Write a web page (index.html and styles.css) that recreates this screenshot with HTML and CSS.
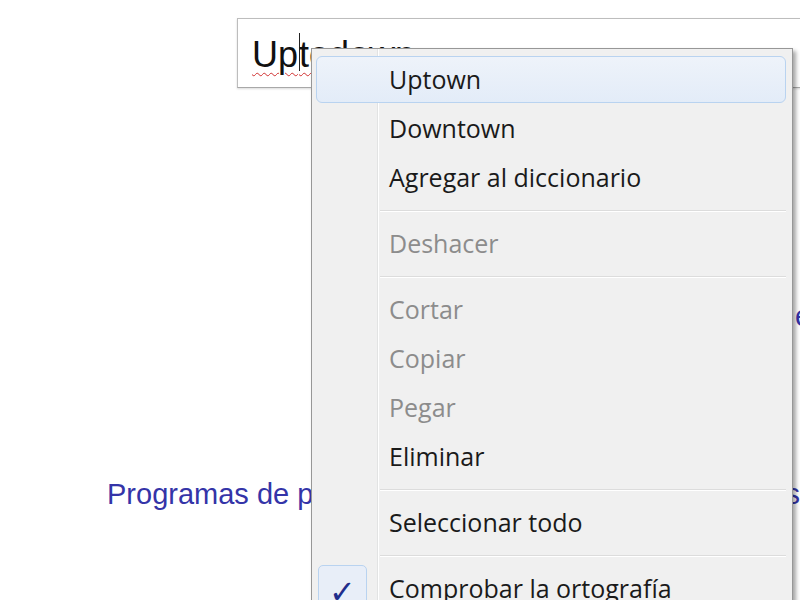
FILE: index.html
```html
<!DOCTYPE html>
<html>
<head>
  <title>Uptodown</title>
  <link rel="stylesheet" href="styles.css">
</head>
<body>
  <div class="page">
    <div class="search-row">
      <div class="search-box">
        <span class="typed"><span class="misspelled">Up</span><span class="caret"></span><span class="misspelled">todown</span></span>
      </div>
    </div>

    <div class="link-row row-top">
      <a class="link right-link" href="#">en</a>
    </div>

    <div class="link-row row-bottom">
      <a class="link left-link" href="#">Programas de prueba</a>
      <a class="link" href="#">s</a>
    </div>

    <ul class="context-menu">
      <li class="item hover">Uptown</li>
      <li class="item">Downtown</li>
      <li class="item">Agregar al diccionario</li>
      <li class="sep"></li>
      <li class="item disabled">Deshacer</li>
      <li class="sep"></li>
      <li class="item disabled">Cortar</li>
      <li class="item disabled">Copiar</li>
      <li class="item disabled">Pegar</li>
      <li class="item">Eliminar</li>
      <li class="sep"></li>
      <li class="item">Seleccionar todo</li>
      <li class="sep"></li>
      <li class="item checked"><span class="check">&#10003;</span>Comprobar la ortografía</li>
    </ul>
  </div>
</body>
</html>
```

FILE: styles.css
```css
html, body {
  margin: 0;
  padding: 0;
  background: #fff;
}
.page {
  position: relative;
  width: 800px;
  height: 600px;
  overflow: hidden;
  font-family: 'Liberation Sans', Arial, sans-serif;
}
.search-row {
  padding: 18px 0 0 237px;
}
.search-box {
  width: 600px;
  height: 70px;
  border: 1px solid #bdbdbd;
  border-bottom-color: #a8a8a8;
  border-right: none;
  box-shadow: 0 1px 2px rgba(0, 0, 0, 0.15);
  box-sizing: border-box;
  padding: 14px 0 0 14px;
  font-size: 36px;
  line-height: 40px;
  color: #111;
}
.typed {
  white-space: nowrap;
}
.misspelled {
  text-decoration: underline wavy #d03030;
  text-decoration-thickness: 1px;
  text-underline-offset: 5px;
}
.caret {
  display: inline-block;
  width: 1px;
  height: 38px;
  background: #222;
  vertical-align: -4px;
  margin: 0 -1px 0 1px;
}
.link-row {
  display: flex;
  font-size: 29px;
  line-height: 32px;
  white-space: nowrap;
}
.row-top {
  margin-top: 212px;
}
.row-bottom {
  margin-top: 146px;
  padding-left: 107px;
}
.link {
  color: #3434a8;
  text-decoration: none;
}
.row-top .right-link {
  margin-left: 795px;
}
.left-link {
  width: 688px;
  overflow: hidden;
}
.context-menu {
  position: absolute;
  left: 311px;
  top: 48px;
  width: 482px;
  height: 580px;
  margin: 0;
  padding: 6px 0 0 0;
  list-style: none;
  box-sizing: border-box;
  background: #f0f0f0;
  border: 1px solid #979797;
  box-shadow: 3px 3px 4px rgba(0, 0, 0, 0.35);
  font-family: 'Open Sans', 'Noto Sans', sans-serif;
  font-size: 25px;
  color: #1a1a1a;
}
.context-menu::before {
  content: "";
  position: absolute;
  left: 65px;
  top: 0;
  bottom: 0;
  width: 1px;
  background: #e2e3e3;
  border-right: 1px solid #fff;
}
.item {
  position: relative;
  height: 49px;
  line-height: 49px;
  padding-left: 77px;
  white-space: nowrap;
}
.item.hover {
  z-index: 1;
}
.item.hover::after {
  content: "";
  position: absolute;
  left: 4px;
  right: 6px;
  top: 1px;
  bottom: 1px;
  border: 1px solid #b9d3f0;
  border-radius: 6px;
  background: linear-gradient(#eef3fa, #e3ecf8);
  z-index: -1;
}
.disabled {
  color: #8c8c8c;
}
.sep {
  position: relative;
  height: 17px;
}
.sep::after {
  content: "";
  position: absolute;
  left: 68px;
  right: 6px;
  top: 8px;
  height: 1px;
  background: #dcdcdc;
  border-bottom: 1px solid #fff;
}
.check {
  position: absolute;
  left: 6px;
  top: 1px;
  width: 49px;
  height: 49px;
  box-sizing: border-box;
  border: 1px solid #b9d3f0;
  border-radius: 5px;
  background: #e8eef8;
  color: #1f2d8c;
  font-family: 'DejaVu Sans', sans-serif;
  font-size: 32px;
  font-weight: bold;
  line-height: 52px;
  text-align: center;
}
```
